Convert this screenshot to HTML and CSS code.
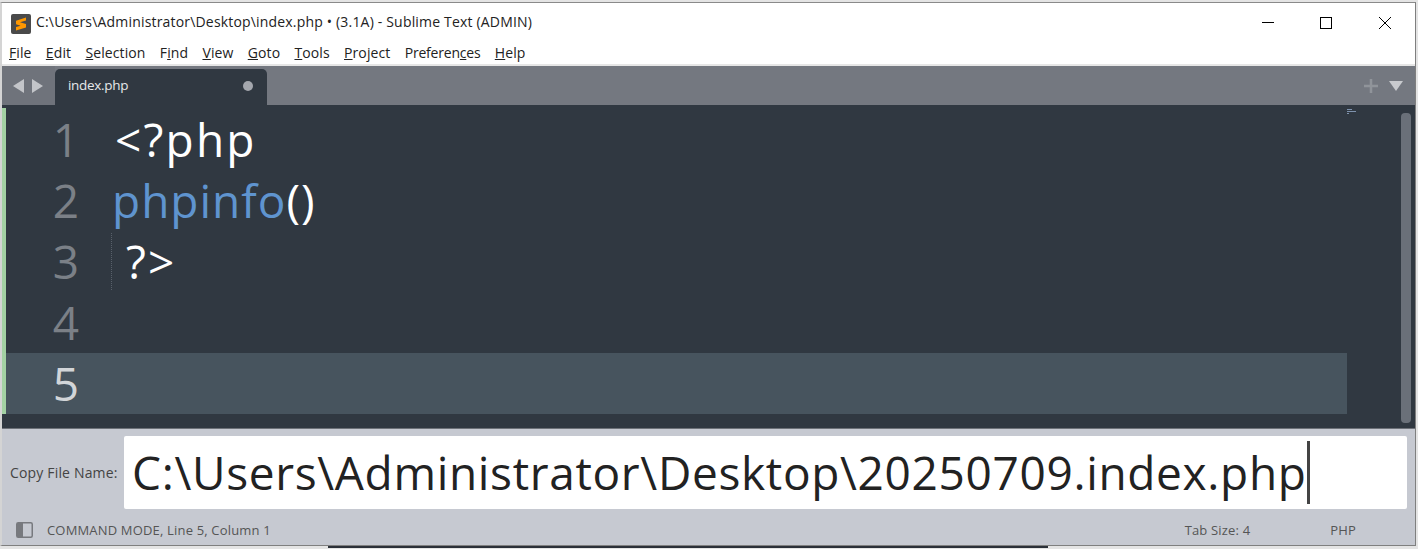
FILE: index.html
```html
<!DOCTYPE html>
<html lang="en">
<head>
<meta charset="utf-8">
<title>index.php - Sublime Text</title>
<link rel="stylesheet" href="styles.css">
</head>
<body>
<div class="window">
  <header class="titlebar">
    <svg class="app-icon" width="20" height="20" viewBox="0 0 20 20"><rect width="20" height="20" rx="2" fill="#4a4a4a"/><path d="M15 3.500 5 6.700v3.600l10 3.200v-3.400L9 8.200l6-1.600zM5 16.500l10-3v-3.300L5 13z" fill="#ff9800"/></svg>
    <span class="title-text">C:\Users\Administrator\Desktop\index.php • (3.1A) - Sublime Text (ADMIN)</span>
    <div class="win-controls">
      <svg width="12" height="12" viewBox="0 0 12 12"><path d="M0 5.500h12" stroke="#000" fill="none"/></svg>
      <svg width="12" height="12" viewBox="0 0 12 12"><rect x=".5" y=".5" width="11" height="11" stroke="#000" fill="none"/></svg>
      <svg class="win-close" width="12" height="12" viewBox="0 0 12 12"><path d="M0 0l12 12M12 0 0 12" stroke="#000" fill="none"/></svg>
    </div>
  </header>
  <nav class="menubar">
    <span><u>F</u>ile</span><span><u>E</u>dit</span><span><u>S</u>election</span><span>F<u>i</u>nd</span><span><u>V</u>iew</span><span><u>G</u>oto</span><span><u>T</u>ools</span><span><u>P</u>roject</span><span class="menu-tight">Preferen<u>c</u>es</span><span><u>H</u>elp</span>
  </nav>
  <div class="tabbar">
    <div class="tab-arrows">
      <svg width="12" height="14" viewBox="0 0 12 14"><path d="M11 0v14L0 7z" fill="#c3c5c9"/></svg>
      <svg width="12" height="14" viewBox="0 0 12 14"><path d="M1 0v14l11-7z" fill="#c3c5c9"/></svg>
    </div>
    <div class="tab"><span class="tab-name">index.php</span><span class="tab-dot"></span></div>
    <div class="tab-actions">
      <svg width="14" height="14" viewBox="0 0 14 14"><path d="M7 0v14M0 7h14" stroke="#90949a" stroke-width="2.500" fill="none"/></svg>
      <svg width="14" height="10" viewBox="0 0 14 10"><path d="M0 0h14L7 10z" fill="#c8cace"/></svg>
    </div>
  </div>
  <main class="editor">
    <div class="lines">
      <div class="line line-first"><span class="num">1</span><span class="code code-wide">&lt;?php</span></div>
      <div class="line"><span class="num">2</span><span class="code code-fn"><span class="fn">phpinfo</span>()</span></div>
      <div class="line"><span class="num">3</span><span class="code code-end code-wide">?&gt;</span></div>
      <div class="line"><span class="num">4</span></div>
      <div class="line active"><span class="num">5</span></div>
    </div>
    <div class="minimap"><svg width="9" height="5" viewBox="0 0 9 5"><path d="M0 0h5v1H0zM0 2h9v1H0zM0 4h2v1H0z" fill="#7f93ad"/></svg></div>
    <div class="scrollbar"></div>
  </main>
  <section class="panel">
    <label class="panel-label">Copy File Name:</label>
    <div class="input"><span class="input-text">C:\Users\Administrator\Desktop\20250709.index.php</span><span class="caret"></span></div>
  </section>
  <footer class="statusbar">
    <svg class="side-icon" width="17" height="16" viewBox="0 0 17 16"><rect x=".75" y=".75" width="15.500" height="14.500" rx="1.500" fill="#c6c9d1" stroke="#77797e" stroke-width="1.500"/><rect x="1" y="1" width="6" height="14" fill="#77797e"/></svg>
    <span class="status-main">COMMAND MODE, Line 5, Column 1</span>
    <span class="status-tab">Tab Size: 4</span>
    <span class="status-syntax">PHP</span>
  </footer>
</div>
<div class="below"><div class="below-window"></div></div>
</body>
</html>
```
FILE: styles.css
```css
* { box-sizing: border-box; }
html, body { margin: 0; padding: 0; }
body {
  width: 1418px;
  height: 549px;
  overflow: hidden;
  background: #e4e4e4;
  font-family: "Open Sans", "Noto Sans", sans-serif;
  padding-top: 2px;
}
.window {
  width: 1416px;
  height: 544px;
  border-left: 2px solid #d4d4d4;
  border-right: 1px solid #7f7f7f;
  border-top: 1px solid #8a8a8a;
  border-bottom: 1px solid #7f7f7f;
  display: flex;
  flex-direction: column;
  background: #fff;
}
.titlebar {
  height: 37px;
  flex: none;
  display: flex;
  align-items: center;
  padding-left: 9px;
}
.app-icon { flex: none; margin-top: 4px; }
.title-text { margin-left: 5px; font-size: 14px; letter-spacing: 0.18px; color: #222; }
.win-controls {
  margin-left: auto;
  display: flex;
  gap: 46px;
  padding-right: 24px;
  margin-top: 2px;
}
.win-close { margin-left: 1px; }
.menubar {
  height: 25px;
  flex: none;
  display: flex;
  gap: 14.3px;
  align-items: center;
  padding-left: 7px;
  font-size: 14px;
  letter-spacing: 0.1px;
  color: #222;
  border-bottom: 1px solid #e6e6e6;
}
.menu-tight { letter-spacing: -0.2px; }
.tabbar {
  height: 40px;
  flex: none;
  background: #747880;
  display: flex;
  align-items: flex-end;
  border-top: 1px solid #e6e6e6;
}
.tab-arrows {
  width: 53px;
  height: 39px;
  display: flex;
  gap: 6px;
  align-items: center;
  padding-left: 11px;
  background: #6f737b;
}
.tab {
  width: 212px;
  height: 36px;
  background: #303841;
  border-radius: 5px 5px 0 0;
  display: flex;
  align-items: center;
  padding: 0 14px 2px 13px;
  color: #e6e8ea;
}
.tab-name { font-size: 13.5px; letter-spacing: -0.3px; margin-top: -2px; }
.tab-dot {
  margin-left: auto;
  width: 10px;
  height: 10px;
  border-radius: 50%;
  background: #a4a7ad;
}
.tab-actions {
  margin-left: auto;
  height: 39px;
  display: flex;
  gap: 11px;
  align-items: center;
  padding-right: 12px;
}
.editor {
  height: 324px;
  flex: none;
  background: #303841;
  display: flex;
  border-bottom: 1px solid #6d7178;
}
.lines {
  width: 1345px;
  flex: none;
  padding-top: 3px;
  display: flex;
  flex-direction: column;
}
.line {
  height: 61px;
  flex: none;
  display: flex;
  align-items: center;
  font-size: 46px;
  line-height: 61px;
  color: #fff;
  border-left: 4px solid #a3d1a3;
}
.line-first { height: 62px; padding-top: 1px; }
.active { background: #47545e; }
.num {
  width: 73px;
  flex: none;
  text-align: right;
  color: #7b8087;
}
.active .num { color: #d2d5d8; }
.code { margin-left: 36px; letter-spacing: 1px; }
.code-wide { letter-spacing: 2.2px; }
.code-fn { margin-left: 33px; }
.code-end { margin-left: 36px; padding-left: 11px; position: relative; }
.code-end::before {
  content: "";
  position: absolute;
  left: -4px;
  top: 2px;
  height: 57px;
  border-left: 1px dotted #59616b;
}
.fn { color: #5f94cf; }
.minimap { width: 54px; flex: none; padding-top: 3px; line-height: 0; }
.scrollbar {
  width: 10px;
  flex: none;
  height: 310px;
  margin-top: 8px;
  background: #6a7079;
  border-radius: 4px;
}
.panel {
  height: 88px;
  flex: none;
  background: #c6c9d1;
  display: flex;
  align-items: center;
  padding: 0 8px 2px 8px;
}
.panel-label { width: 114px; flex: none; font-size: 14px; letter-spacing: 0.17px; color: #444; }
.input {
  width: 1283px;
  height: 73px;
  background: #fff;
  border-radius: 2px;
  display: flex;
  align-items: center;
  padding-left: 8px;
  color: #222;
}
.input-text { font-size: 46px; letter-spacing: 0.67px; }
.caret { width: 3px; height: 63px; background: #444; }
.statusbar {
  flex: 1;
  background: #c6c9d1;
  display: flex;
  align-items: center;
  font-size: 13px;
  letter-spacing: 0.17px;
  color: #555;
  padding: 0 0 2px 14px;
}
.side-icon { flex: none; }
.status-main { margin-left: 14px; }
.status-tab { margin-left: auto; }
.status-syntax { margin-left: 80px; margin-right: 59px; }
.below { height: 2px; padding-left: 328px; }
.below-window { width: 720px; height: 2px; background: #2b3038; }
```
